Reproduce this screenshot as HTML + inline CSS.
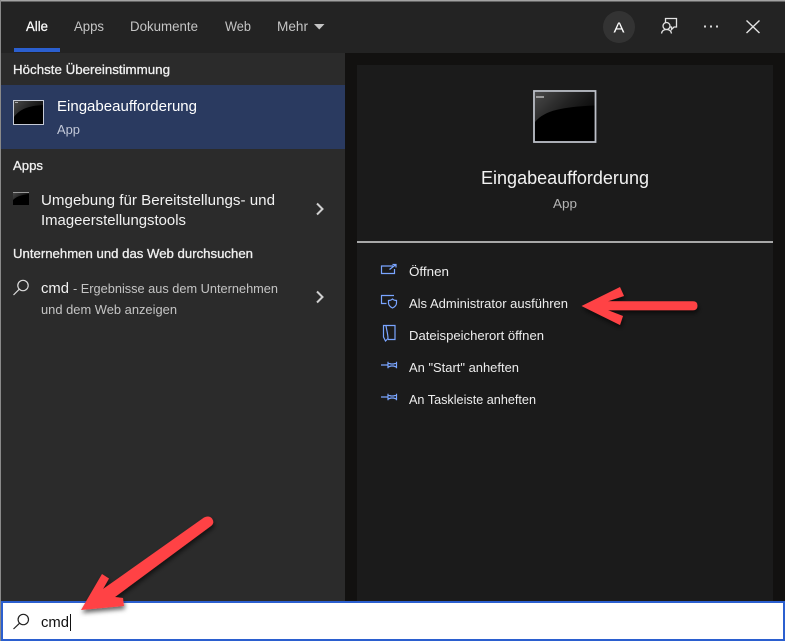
<!DOCTYPE html>
<html><head><meta charset="utf-8"><style>
html,body{margin:0;padding:0;background:#1b1b1b;width:785px;height:641px;overflow:hidden}
svg{display:block;position:absolute;left:0;top:0}
text{font-family:"Liberation Sans",sans-serif;white-space:pre}
.b{stroke:#f0f0f0;stroke-width:.3px}
</style></head><body>
<svg width="785" height="641" viewBox="0 0 785 641" xmlns="http://www.w3.org/2000/svg">
<defs>
<linearGradient id="g" x1="0" y1="0" x2="1" y2=".5"><stop offset="0" stop-color="#4a4a4a"/><stop offset=".55" stop-color="#242424"/><stop offset="1" stop-color="#0c0c0c"/></linearGradient>
<filter id="s" x="-20%" y="-20%" width="140%" height="140%"><feDropShadow dx="1" dy="3" stdDeviation="2.5" flood-color="#000" flood-opacity=".6"/></filter>
</defs>
<rect width="785" height="641" fill="#121110"/>
<rect x="0" y="0" width="785" height="53" fill="#232323"/>
<rect x="0" y="0" width="785" height="1.5" fill="#a3a3a3"/>
<rect x="1" y="53" width="344" height="548" fill="#2b2b2b"/>
<rect x="0" y="0" width="1" height="641" fill="#8a8a8a"/>
<rect x="357" y="65" width="416" height="536" fill="#1b1b1b"/>
<rect x="1" y="85" width="344" height="64" fill="#2a3a60"/>
<rect x="14" y="48" width="46" height="4" fill="#2b5fcf"/>

<!-- tabs -->
<g font-size="13.500">
<text x="26" y="31" fill="#fff" class="b" textLength="22" lengthAdjust="spacingAndGlyphs">Alle</text>
<text x="74" y="31" fill="#c4c4c4" textLength="30" lengthAdjust="spacingAndGlyphs">Apps</text>
<text x="130" y="31" fill="#c4c4c4" textLength="68" lengthAdjust="spacingAndGlyphs">Dokumente</text>
<text x="225" y="31" fill="#c4c4c4" textLength="26" lengthAdjust="spacingAndGlyphs">Web</text>
<text x="277" y="31" fill="#c4c4c4" textLength="31" lengthAdjust="spacingAndGlyphs">Mehr</text>
</g>
<path d="M314 24h10.500l-5.250 5.500z" fill="#c4c4c4"/>

<!-- header right -->
<circle cx="619" cy="27" r="16" fill="#333"/>
<text x="613.500" y="32.500" font-size="15" fill="#fff" textLength="11" lengthAdjust="spacingAndGlyphs">A</text>
<g fill="none" stroke="#e2e2e2" stroke-width="1.300">
<path d="M665.500 23V18.500H676.500V27H674L671.500 29.500V27H670"/>
<circle cx="666.500" cy="26" r="3.500"/>
<path d="M661.500 33.500C662 30.500 664 29.500 666.500 29.500S671 30.500 671.500 33.500"/>
<path d="M746.500 20.500L759.500 33M759.500 20.500L746.500 33" stroke-width="1.400"/>
</g>
<g fill="#d8d8d8"><rect x="704" y="25.500" width="2" height="2"/><rect x="710" y="25.500" width="2" height="2"/><rect x="716" y="25.500" width="2" height="2"/></g>

<!-- left list -->
<text x="13" y="74" font-size="13" class="b" fill="#f0f0f0" textLength="157" lengthAdjust="spacingAndGlyphs">Höchste Übereinstimmung</text>
<rect x="13.500" y="100.500" width="30" height="24" fill="#000" stroke="#c5cad6"/>
<path d="M14 117C20 109 28 106 43 105V101H14z" fill="url(#g)"/>
<rect x="15" y="102" width="3" height="1" fill="#aaa"/>
<text x="57" y="111" font-size="15" fill="#fff" textLength="140" lengthAdjust="spacingAndGlyphs">Eingabeaufforderung</text>
<text x="57" y="134" font-size="13" fill="#c2c8d8" textLength="23" lengthAdjust="spacingAndGlyphs">App</text>

<text x="13" y="170" font-size="13" class="b" fill="#f0f0f0" textLength="30" lengthAdjust="spacingAndGlyphs">Apps</text>
<rect x="13" y="192" width="16" height="13" fill="#000"/>
<path d="M13 200C17 196 22 195 29 194V192H13z" fill="url(#g)"/>
<rect x="13" y="192" width="16" height="1" fill="#999"/>
<text x="41" y="205" font-size="14.500" fill="#f2f2f2" textLength="234" lengthAdjust="spacingAndGlyphs">Umgebung für Bereitstellungs- und</text>
<text x="41" y="225" font-size="14.500" fill="#f2f2f2" textLength="145" lengthAdjust="spacingAndGlyphs">Imageerstellungstools</text>
<path d="M317 203.500L322.500 209L317 214.500" fill="none" stroke="#d0d0d0" stroke-width="2"/>

<text x="13" y="258" font-size="13" class="b" fill="#f0f0f0" textLength="240" lengthAdjust="spacingAndGlyphs">Unternehmen und das Web durchsuchen</text>
<g fill="none" stroke="#dcdcdc" stroke-width="1.200"><circle cx="23" cy="285.500" r="5.200"/><path d="M19.300 289.200L13.500 295"/></g>
<text x="41" y="293" font-size="15" fill="#f2f2f2" textLength="28" lengthAdjust="spacingAndGlyphs">cmd</text>
<text x="73" y="293" font-size="12.500" fill="#c4c4c4" textLength="205" lengthAdjust="spacingAndGlyphs">- Ergebnisse aus dem Unternehmen</text>
<text x="41" y="314" font-size="12.500" fill="#c4c4c4" textLength="136" lengthAdjust="spacingAndGlyphs">und dem Web anzeigen</text>
<path d="M317 291.500L322.500 297L317 302.500" fill="none" stroke="#d0d0d0" stroke-width="2"/>

<!-- right detail -->
<rect x="534" y="91" width="61.500" height="51" fill="#000" stroke="#bcc0c8" stroke-width="1.800"/>
<path d="M535 122C545 110 563 107 594.500 105.500V92H535z" fill="url(#g)"/>
<rect x="536" y="96" width="8" height="2" fill="#999"/>
<text x="481" y="184" font-size="18" fill="#f2f2f2" textLength="168" lengthAdjust="spacingAndGlyphs">Eingabeaufforderung</text>
<text x="553" y="208" font-size="13" fill="#b4b4b4" textLength="24" lengthAdjust="spacingAndGlyphs">App</text>
<rect x="357" y="241" width="416" height="2" fill="#a8a8a8"/>

<g font-size="13" fill="#ededed">
<text x="409" y="276" textLength="40" lengthAdjust="spacingAndGlyphs">Öffnen</text>
<text x="409" y="308" textLength="159" lengthAdjust="spacingAndGlyphs">Als Administrator ausführen</text>
<text x="409" y="340" textLength="135" lengthAdjust="spacingAndGlyphs">Dateispeicherort öffnen</text>
<text x="409" y="372" textLength="110" lengthAdjust="spacingAndGlyphs">An "Start" anheften</text>
<text x="409" y="404" textLength="127" lengthAdjust="spacingAndGlyphs">An Taskleiste anheften</text>
</g>
<g fill="none" stroke="#7aa5ff" stroke-width="1.200">
<path d="M393 266H381.500V273.500H394.500V269"/>
<path d="M389.500 269.500L396 264.500M392.500 264.500H396V267.500"/>
<path d="M386.500 303.500H381.500V295.500H394"/>
<path d="M388.500 300.500C391 300.500 392 299.500 392.500 299C393 299.500 394.500 300.500 396.500 300.500V303C396.500 305.500 394.500 307 392.500 308C390.500 307 388.500 305.500 388.500 303z"/>
<path d="M386 325.500H395V339.500H388M386 325.500H383.500V337L385.500 341L388 338.500C388 334 386.500 330 386 325.500z"/>
<path d="M381 365H388M388 361.800V368.300M388 363L391 364H393.500L396.500 363M388 367L391 366H393.500L396.500 367M396.500 361.800V368.300"/>
<path d="M381 397H388M388 393.800V400.300M388 395L391 396H393.500L396.500 395M388 399L391 398H393.500L396.500 399M396.500 393.800V400.300"/>
</g>

<!-- search box -->
<rect x="2" y="602" width="782" height="38" fill="#fff" stroke="#2b5fcf" stroke-width="2"/>
<g fill="none" stroke="#222" stroke-width="1.200"><circle cx="23.300" cy="619.500" r="5.200"/><path d="M19.600 623.200L13.500 629"/></g>
<text x="41" y="627" font-size="15" fill="#111" textLength="28" lengthAdjust="spacingAndGlyphs">cmd</text>
<rect x="70" y="614" width="1" height="17" fill="#111"/>

<!-- red arrows -->
<g fill="#ff4245" filter="url(#s)">
<path d="M581.500 306L620 287L624 296L608 301.300H693Q697.500 301.300 697.500 305.700Q697.500 310.200 693 310.200H608L623 316L620 325z"/>
<path d="M81 610L102 574L109 578.500L103 589L204 517.500Q209 515 212 518.500Q215 523 211 526L115 597L123 598L124 606z"/>
</g>
</svg>
</body></html>
